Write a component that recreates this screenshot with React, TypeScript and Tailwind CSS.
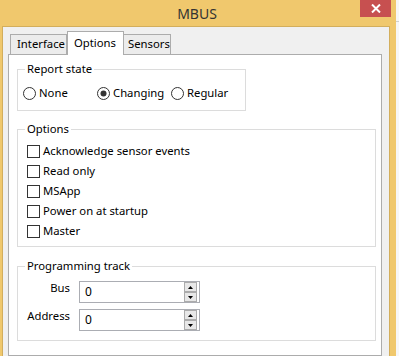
import React from "react";

const FONT = "font-['Segoe_UI','Noto_Sans',sans-serif]";

function Radio({ checked, label, className = "" }: { checked?: boolean; label: string; className?: string }) {
  return (
    <label className={`flex h-[16px] items-center gap-[3px] ${className}`}>
      <svg width="13" height="13" viewBox="0 0 13 13" className="shrink-0">
        <circle cx="6.5" cy="6.5" r="6" fill="#ffffff" stroke="#333333" strokeWidth="1" />
        {checked && <circle cx="6.5" cy="6.5" r="3" fill="#333333" />}
      </svg>
      <span>{label}</span>
    </label>
  );
}

function Check({ label }: { label: string }) {
  return (
    <label className="flex h-[20px] items-center gap-[3px]">
      <span className="h-[13px] w-[13px] shrink-0 border border-[#333333] bg-white" />
      <span>{label}</span>
    </label>
  );
}

function Spin({ value }: { value: string }) {
  return (
    <div className="flex h-[22px] w-[121px] border border-[#abadb3] bg-white">
      <span className="flex-1 pl-[5px] text-[12px] leading-[20px]">{value}</span>
      <div className="mr-[2px] flex w-[13px] flex-col">
        {/* up / down */}
        <button className="flex flex-1 items-center justify-center border border-[#acacac] bg-[#e8e8e8]">
          <svg width="5" height="3" viewBox="0 0 5 3">
            <path d="M2.5 0 L5 3 L0 3 Z" fill="#000" />
          </svg>
        </button>
        <button className="flex flex-1 items-center justify-center border border-[#acacac] bg-[#e8e8e8]">
          <svg width="5" height="3" viewBox="0 0 5 3">
            <path d="M0 0 L5 0 L2.5 3 Z" fill="#000" />
          </svg>
        </button>
      </div>
    </div>
  );
}

function Group({ title, className = "", children }: { title: string; className?: string; children: React.ReactNode }) {
  return (
    <fieldset className={`m-0 border border-[#dcdcdc] p-0 ${className}`}>
      <legend className="ml-[7px] px-[2px] leading-[16px]">{title}</legend>
      {children}
    </fieldset>
  );
}

export default function App() {
  return (
    <div className={`flex h-[356px] w-[399px] overflow-hidden text-[11.3px] text-black ${FONT}`}>
      {/* window frame */}
      <div className="flex w-[396px] flex-col bg-[#f0c86d] pl-[2px] pr-[6px]">
        <div className="relative flex h-[26px] shrink-0 items-center justify-center">
          <span className="pl-[2px] text-[14px] text-[#333333]">MBUS</span>
          <div className="absolute right-[-1px] top-0 flex h-[17px] w-[31px] items-center justify-center bg-[#c75050]">
            <svg width="10" height="9" viewBox="0 0 10 9">
              <path d="M1 0.5 L9 8.5 M9 0.5 L1 8.5" stroke="#ffffff" strokeWidth="2" />
            </svg>
          </div>
        </div>

        <div className="flex flex-1 flex-col border-l border-r border-t border-[#d3ae5c] bg-[#f0f0f0] pl-[5px] pr-[7px] pt-[4px]">
          {/* tabs */}
          <div className="flex h-[23px] items-end pl-[2px]">
            <div className="flex h-[20px] w-[57px] items-center border border-b-0 border-[#acacac] bg-[#ececec] pl-[6px]">
              Interface
            </div>
            <div className="relative z-10 -mb-px flex h-[24px] w-[57px] items-start border border-b-0 border-[#acacac] bg-white pl-[6px] pt-[3px]">
              Options
            </div>
            <div className="flex h-[20px] w-[47px] items-center border border-b-0 border-l-0 border-[#acacac] bg-[#ececec] pl-[4px]">
              Sensors
            </div>
          </div>

          {/* page */}
          <div className="flex flex-1 flex-col border border-[#acacac] bg-white px-[8px] pt-[6px]">
            <Group title="Report state" className="w-[229px]">
              <div className="flex pb-[9px] pl-[5px] pt-[8px]">
                <Radio label="None" className="w-[74px]" />
                <Radio label="Changing" checked className="w-[74px]" />
                <Radio label="Regular" />
              </div>
            </Group>

            <Group title="Options" className="mt-[10px] w-[359px]">
              <div className="flex flex-col pb-[5px] pl-[9px] pt-[4px]">
                <Check label="Acknowledge sensor events" />
                <Check label="Read only" />
                <Check label="MSApp" />
                <Check label="Power on at startup" />
                <Check label="Master" />
              </div>
            </Group>

            <Group title="Programming track" className="mt-[11px] w-[359px]">
              <div className="flex flex-col gap-[6px] pb-[9px] pl-[9px] pt-[7px]">
                <div className="flex items-start gap-[9px]">
                  <span className="w-[43px] text-right leading-[14px]">Bus</span>
                  <Spin value="0" />
                </div>
                <div className="flex items-start gap-[9px]">
                  <span className="w-[43px] text-right leading-[14px]">Address</span>
                  <Spin value="0" />
                </div>
              </div>
            </Group>
          </div>
        </div>
      </div>
      {/* outside the window */}
      <div className="flex flex-1 flex-col bg-[#f7f7f7]">
        <div className="mt-[21px] h-px bg-[#d0d0d0]" />
      </div>
    </div>
  );
}
